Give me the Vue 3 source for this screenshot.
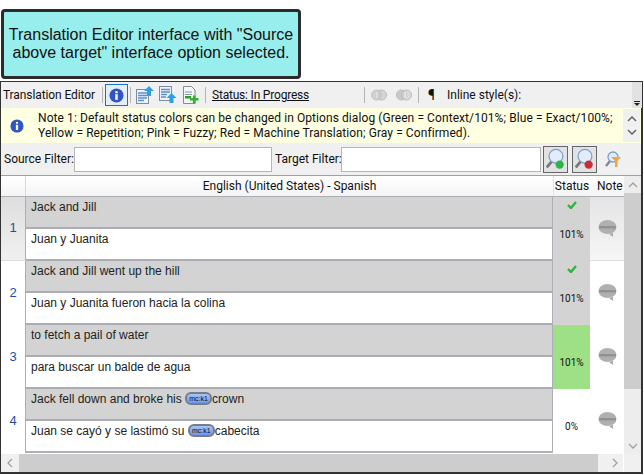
<script setup>
// Translation Editor screenshot: callout above the editor window.
const filas = [
  { n: 1, fuente: ['Jack and Jill'], destino: ['Juan y Juanita'], estado: '101%', check: true, tono: 'gris', activa: true },
  { n: 2, fuente: ['Jack and Jill went up the hill'], destino: ['Juan y Juanita fueron hacia la colina'], estado: '101%', check: true, tono: 'gris' },
  { n: 3, fuente: ['to fetch a pail of water'], destino: ['para buscar un balde de agua'], estado: '101%', check: false, tono: 'verde' },
  { n: 4, fuente: ['Jack fell down and broke his ', 'crown'], destino: ['Juan se cayó y se lastimó su ', 'cabecita'], estado: '0%', check: false, tono: 'blanco' },
]
</script>

<template>
  <div class="page">
    <div class="callout">Translation Editor interface with "Source above target" interface option selected.</div>

    <div class="window">
      <div class="toolbar">
        <span class="tab-title">Translation Editor</span>
        <i class="sep"></i>
        <span class="info-btn">
          <svg width="15" height="15" viewBox="0 0 16 16"><circle cx="8" cy="8" r="7.5" fill="#2f55c4" /><circle cx="8" cy="4.4" r="1.3" fill="#fff" /><rect x="6.7" y="6.6" width="2.6" height="6" fill="#fff" /></svg>
        </span>
        <i class="sep"></i>
        <svg class="tool t1" width="18" height="18" viewBox="0 0 18 18"><rect x="0.5" y="3.5" width="12" height="14" fill="#eef3fa" stroke="#7f8c9c" /><path d="M2 7h9M2 9.5h9M2 12h9M2 14.5h6" stroke="#5a8fd0" stroke-width="1.3" /><path d="M13 0l5 5h-3v5h-4v-5h-3z" fill="#2f9fe0" /></svg>
        <svg class="tool t2" width="18" height="18" viewBox="0 0 18 18"><rect x="0.5" y="0.5" width="12" height="14" fill="#eef3fa" stroke="#7f8c9c" /><path d="M2 3.5h9M2 6h9M2 8.5h6M2 11h5" stroke="#5a8fd0" stroke-width="1.3" /><path d="M12.5 7l5 5h-3v5h-4v-5h-3z" fill="#2f9fe0" /></svg>
        <svg class="tool t3" width="16" height="18" viewBox="0 0 16 18"><path d="M0.5 0.5h8l3.5 3.5v13.5h-11.5z" fill="#f4f4f4" stroke="#7f8c9c" /><path d="M2 6h7M2 8.5h7" stroke="#8a96a5" /><rect x="2" y="10" width="6" height="2.5" fill="#2ca02c" /><path d="M10 9.5h2.5v2.500h3v2.500h-3v3h-2.500v-3h-3v-2.500h3z" fill="#35b035" /></svg>
        <i class="sep s3"></i>
        <span class="status-link">Status: In Progress</span>
        <i class="sep s4"></i>
        <svg class="rings" width="16" height="14" viewBox="0 0 16 14"><circle cx="5.5" cy="7" r="5" fill="#d0d0d0" stroke="#c2c2c2" /><circle cx="10.5" cy="7" r="5" fill="#c8c8c8" fill-opacity="0.7" stroke="#bcbcbc" /><path d="M6 4v6" stroke="#f2f2f2" stroke-width="1.2" /></svg>
        <svg class="rings r2" width="16" height="14" viewBox="0 0 16 14"><circle cx="5.5" cy="7" r="5" fill="#c8c8c8" stroke="#bcbcbc" /><circle cx="10.5" cy="7" r="5" fill="#d0d0d0" fill-opacity="0.7" stroke="#bcbcbc" /><path d="M9 4v6" stroke="#f2f2f2" stroke-width="1.2" /></svg>
        <i class="sep s5"></i>
        <span class="pilcrow">¶</span>
        <span class="inline-label">Inline style(s):</span>
        <span class="overflow"><b></b></span>
      </div>

      <div class="note">
        <svg class="note-icon" width="14" height="14" viewBox="0 0 16 16"><circle cx="8" cy="8" r="7.5" fill="#2f55c4" /><circle cx="8" cy="4.4" r="1.3" fill="#fff" /><rect x="6.7" y="6.6" width="2.6" height="6" fill="#fff" /></svg>
        <div class="note-text">Note 1: Default status colors can be changed in Options dialog (Green = Context/101%; Blue = Exact/100%;<br />Yellow = Repetition; Pink = Fuzzy; Red = Machine Translation; Gray = Confirmed).</div>
        <div class="note-scroll">
          <svg width="10" height="6" viewBox="0 0 10 6"><path d="M1 5l4-4 4 4" fill="none" stroke="#666" stroke-width="1.5" /></svg>
          <svg width="10" height="6" viewBox="0 0 10 6"><path d="M1 1l4 4 4-4" fill="none" stroke="#666" stroke-width="1.5" /></svg>
        </div>
      </div>

      <div class="filters">
        <label class="l-source">Source Filter:</label>
        <span class="box box-source"></span>
        <label class="l-target">Target Filter:</label>
        <span class="box box-target"></span>
        <span class="lens-btn">
          <svg width="25" height="27" viewBox="0 0 25 27"><path d="M9 15l-6 7" stroke="#777" stroke-width="3" /><circle cx="13" cy="10" r="7.5" fill="#e3ecfb" stroke="#7d9fd6" stroke-width="1.4" /><circle cx="17" cy="19" r="4.5" fill="#2cb34a" /></svg>
        </span>
        <span class="lens-btn b2">
          <svg width="25" height="27" viewBox="0 0 25 27"><path d="M9 15l-6 7" stroke="#777" stroke-width="3" /><circle cx="13" cy="10" r="7.5" fill="#e3ecfb" stroke="#7d9fd6" stroke-width="1.4" /><circle cx="17" cy="19" r="4.5" fill="#cf2b36" /></svg>
        </span>
        <svg class="lens-plain" width="16" height="17" viewBox="0 0 16 17"><path d="M5 10l-4 5" stroke="#888" stroke-width="2.4" /><circle cx="8" cy="6" r="5" fill="#e3ecfb" stroke="#7d9fd6" stroke-width="1.3" /><path d="M6 6h10l-3.5 4v6h-2.5v-6z" fill="#f0a640" /></svg>
      </div>

      <div class="grid-wrap">
        <div class="grid-main">
          <div class="grid-head">
            <span class="h-num"></span>
            <span class="h-text">English (United States) - Spanish</span>
            <span class="h-status">Status</span>
            <span class="h-note">Note</span>
          </div>
          <div v-for="fila in filas" :key="fila.n" class="row">
            <div class="num" :class="{ activa: fila.activa }">{{ fila.n }}</div>
            <div class="texts">
              <div class="seg source">
                {{ fila.fuente[0] }}<template v-if="fila.fuente[1]"><span class="tag">mc:k1</span>{{ fila.fuente[1] }}</template>
              </div>
              <div class="seg target">
                {{ fila.destino[0] }}<template v-if="fila.destino[1]"><span class="tag">mc:k1</span>{{ fila.destino[1] }}</template>
              </div>
            </div>
            <div class="status" :class="fila.tono">
              <svg v-if="fila.check" class="check" width="10" height="8" viewBox="0 0 10 8"><path d="M1 4l3 3 5-6" fill="none" stroke="#2fb344" stroke-width="2.4" /></svg>
              <span>{{ fila.estado }}</span>
            </div>
            <div class="note-cell" :class="{ activa: fila.activa }">
              <svg width="19" height="17" viewBox="0 0 19 17"><path d="M15 13v4l-4-3z" fill="#a9a9a9" /><ellipse cx="9.5" cy="7" rx="9" ry="7" fill="#b0b0b0" /><path d="M1 6h17v2.500h-17z" fill="#929292" /></svg>
            </div>
          </div>
        </div>
        <div class="vscroll">
          <span class="arrow"><svg width="10" height="6" viewBox="0 0 10 6"><path d="M1 5l4-4 4 4" fill="none" stroke="#a0a0a0" stroke-width="1.3" /></svg></span>
          <span class="thumb"></span>
          <span class="rest"></span>
          <span class="arrow"><svg width="10" height="6" viewBox="0 0 10 6"><path d="M1 1l4 4 4-4" fill="none" stroke="#a0a0a0" stroke-width="1.3" /></svg></span>
        </div>
      </div>

      <div class="hscroll">
        <span class="arrow-h"><svg width="6" height="10" viewBox="0 0 6 10"><path d="M5 1l-4 4 4 4" fill="none" stroke="#a0a0a0" stroke-width="1.3" /></svg></span>
        <span class="thumb-h"></span>
        <span class="arrow-h derecha"><svg width="6" height="10" viewBox="0 0 6 10"><path d="M1 1l4 4-4 4" fill="none" stroke="#a0a0a0" stroke-width="1.3" /></svg></span>
        <span class="corner"></span>
      </div>
    </div>
  </div>
</template>

<style>
html,
body {
  margin: 0;
  background: #fff;
}
</style>

<style scoped>
.page {
  width: 644px;
  height: 475px;
  overflow: hidden;
  padding: 9px 0 0 1px;
  box-sizing: border-box;
  font-family: Roboto, 'Noto Sans', sans-serif;
}
.callout {
  width: 300px;
  height: 70px;
  box-sizing: border-box;
  border: 3px solid #2b2b2b;
  border-radius: 4px;
  background: #98eeec;
  color: #111;
  font-family: 'Liberation Sans', Arial, sans-serif;
  font-size: 16px;
  line-height: 18px;
  text-align: center;
  padding: 14px 4px 0;
}
.window {
  width: 643px;
  height: 393px;
  margin: 2px 0 0 -1px;
  box-sizing: border-box;
  border: 1px solid #333;
  border-right-width: 2px;
  border-bottom-width: 2px;
  display: flex;
  flex-direction: column;
  background: #f0f0f0;
}
.toolbar {
  height: 26px;
  display: flex;
  align-items: center;
  font-size: 12px;
  color: #111;
  flex: none;
}
.tab-title {
  padding-left: 2px;
  width: 99px;
  white-space: nowrap;
  letter-spacing: -0.1px;
  flex: none;
}
.sep {
  width: 1px;
  height: 16px;
  background: #b4b4b4;
  flex: none;
}
.info-btn {
  width: 23px;
  height: 22px;
  margin: 0 2px;
  box-sizing: border-box;
  border: 1px solid #1b72c8;
  background: #e4eef8;
  display: flex;
  align-items: center;
  justify-content: center;
  flex: none;
}
.tool {
  flex: none;
}
.t1 {
  margin-left: 5px;
}
.t2 {
  margin-left: 5px;
}
.t3 {
  margin-left: 6px;
}
.s3 {
  margin-left: 6px;
}
.status-link {
  margin-left: 6px;
  width: 152px;
  flex: none;
  white-space: nowrap;
  letter-spacing: -0.2px;
  text-decoration: underline;
}
.rings {
  margin-left: 6px;
  flex: none;
}
.r2 {
  margin-left: 9px;
}
.s5 {
  margin-left: 6px;
}
.pilcrow {
  margin-left: 9px;
  width: 8px;
  font-size: 14px;
  flex: none;
}
.inline-label {
  margin-left: 11px;
  width: 185px;
  flex: none;
  white-space: nowrap;
}
.overflow {
  width: 10px;
  height: 26px;
  background: #e2e2e2;
  position: relative;
  flex: none;
}
.overflow b {
  position: absolute;
  left: 2px;
  bottom: 2px;
  width: 0;
  height: 0;
  border: 3px solid transparent;
  border-top-color: #222;
  border-bottom: 0;
}
.overflow b::before {
  content: '';
  position: absolute;
  left: -3px;
  top: -5px;
  width: 6px;
  height: 1px;
  background: #222;
}
.note {
  height: 35px;
  flex: none;
  background: #ffffe1;
  display: flex;
  align-items: center;
  font-size: 12px;
  line-height: 15px;
  color: #111;
}
.note-icon {
  margin-left: 9px;
  flex: none;
}
.note-text {
  margin-left: 14px;
  flex: 1;
  white-space: nowrap;
  letter-spacing: 0.08px;
}
.note-scroll {
  width: 17px;
  height: 33px;
  margin-right: 1px;
  background: #f0f0f0;
  display: flex;
  flex-direction: column;
  align-items: center;
  justify-content: space-around;
  padding: 4px 0;
  box-sizing: border-box;
  flex: none;
}
.filters {
  height: 33px;
  flex: none;
  display: flex;
  align-items: center;
  font-size: 12px;
  color: #111;
  border-bottom: 1px solid #a0a0a0;
  box-sizing: border-box;
}
.filters label {
  white-space: nowrap;
  flex: none;
}
.l-source {
  width: 70px;
  padding-left: 3px;
  box-sizing: border-box;
  margin-right: 3px;
}
.l-target {
  width: 65px;
  margin-left: 3px;
}
.box {
  height: 25px;
  background: #fff;
  border: 1px solid #b5b5b5;
  box-sizing: border-box;
  flex: none;
}
.box-source {
  width: 198px;
}
.box-target {
  width: 200px;
  margin-left: 1px;
}
.lens-btn {
  width: 25px;
  height: 27px;
  margin-left: 2px;
  box-sizing: border-box;
  border: 1px solid #666;
  background: #e2e2e2;
  display: flex;
  align-items: center;
  justify-content: center;
  overflow: hidden;
  flex: none;
}
.b2 {
  margin-left: 4px;
}
.lens-plain {
  margin-left: 8px;
  flex: none;
}
.grid-wrap {
  flex: 1;
  display: flex;
  min-height: 0;
  background: #fff;
}
.grid-main {
  width: 623px;
  flex: none;
  overflow: hidden;
}
.grid-head {
  height: 21px;
  display: flex;
  font-size: 12px;
  line-height: 21px;
  color: #111;
  text-align: center;
  background: linear-gradient(#fff, #f4f4f4);
  border-bottom: 1px solid #adadb5;
  box-sizing: border-box;
}
.h-num {
  width: 25px;
  flex: none;
  border-right: 1px solid #d9d9d9;
  box-sizing: border-box;
}
.h-text {
  width: 527px;
  flex: none;
}
.h-status {
  width: 37px;
  flex: none;
  border-left: 1px solid #e3e3e3;
  box-sizing: border-box;
}
.h-note {
  width: 34px;
  flex: none;
  white-space: nowrap;
  padding-left: 7px;
  text-align: left;
  box-sizing: border-box;
}
.row {
  height: 64px;
  display: flex;
}
.num {
  width: 25px;
  flex: none;
  box-sizing: border-box;
  border-right: 1px solid #adadb5;
  padding-bottom: 2px;
  color: #1f4fa0;
  font-family: 'Liberation Sans', Arial, sans-serif;
  font-size: 13px;
  display: flex;
  align-items: center;
  justify-content: center;
  background: #fff;
}
.num.activa {
  background: linear-gradient(#dedede, #f0f0f0);
  border-bottom: 1px solid #ddd;
}
.texts {
  width: 527px;
  flex: none;
  border-right: 1px solid #adadb5;
  box-sizing: border-box;
}
.seg {
  height: 32px;
  box-sizing: border-box;
  border-bottom: 2px solid #adadb5;
  padding: 3px 0 0 5px;
  font-family: 'Liberation Sans', Arial, sans-serif;
  font-size: 12px;
  line-height: 14px;
  color: #222;
  white-space: nowrap;
}
.source {
  background: #d3d3d3;
}
.target {
  background: #fff;
}
.tag {
  display: inline-block;
  vertical-align: middle;
  width: 27px;
  height: 13px;
  margin-top: -2px;
  box-sizing: border-box;
  border: 2px solid #777d88;
  border-radius: 6px;
  background: linear-gradient(#a9c4f5, #6f98ea);
  font-size: 7px;
  line-height: 9px;
  text-align: center;
  color: #111;
  overflow: hidden;
}
.status {
  width: 37px;
  flex: none;
  position: relative;
  display: flex;
  align-items: center;
  justify-content: center;
  font-size: 10px;
  color: #111;
}
.status span {
  margin-top: 10px;
}
.status.gris {
  background: #d3d3d3;
}
.status.verde {
  background: #9de085;
}
.status.blanco {
  background: #fff;
}
.check {
  position: absolute;
  top: 4px;
  left: 14px;
}
.note-cell {
  width: 34px;
  flex: none;
  display: flex;
  align-items: center;
  justify-content: center;
  padding-bottom: 1px;
  box-sizing: border-box;
  background: #fff;
}
.note-cell.activa {
  background: linear-gradient(#e4e4e4, #f6f6f6);
  border-bottom: 1px solid #ddd;
}
.vscroll {
  width: 17px;
  flex: none;
  display: flex;
  flex-direction: column;
  background: #ededed;
}
.arrow {
  height: 17px;
  flex: none;
  display: flex;
  align-items: center;
  justify-content: center;
}
.thumb {
  height: 196px;
  flex: none;
  background: #cdcdcd;
}
.rest {
  flex: 1;
}
.hscroll {
  height: 18px;
  flex: none;
  display: flex;
  background: #f0f0f0;
}
.arrow-h {
  width: 18px;
  flex: none;
  display: flex;
  align-items: center;
  justify-content: center;
}
.arrow-h.derecha {
  width: 25px;
  justify-content: flex-end;
  padding-right: 5px;
  box-sizing: border-box;
}
.thumb-h {
  width: 579px;
  flex: none;
  background: #cdcdcd;
}
.corner {
  flex: 1;
  border-left: 1px solid #fff;
}
</style>
